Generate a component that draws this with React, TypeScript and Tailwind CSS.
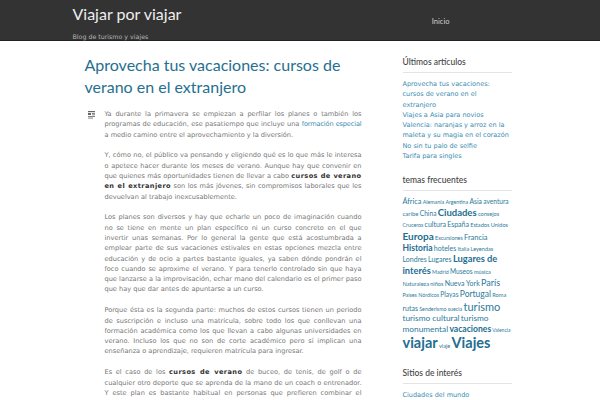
import React from "react";

const body = "font-['DejaVu_Sans',Verdana,sans-serif]";
const head = "font-['Lato','Open_Sans',sans-serif]";

const latest = [
  "Aprovecha tus vacaciones: cursos de verano en el extranjero",
  "Viajes a Asia para novios",
  "Valencia: naranjas y arroz en la maleta y su magia en el corazón",
  "No sin tu palo de selfie",
  "Tarifa para singles",
];

// [label, size in px, bold]
const tags: [string, number, boolean][] = [
  ["África", 7.3, false],
  ["Alemania", 5.3, false],
  ["Argentina", 5.3, false],
  ["Asia", 6.8, false],
  ["aventura", 6.6, false],
  ["caribe", 6, false],
  ["China", 6.6, false],
  ["Ciudades", 9.5, true],
  ["consejos", 5.6, false],
  ["Cruceros", 5.3, false],
  ["cultura", 7, false],
  ["España", 7, false],
  ["Estados Unidos", 5.6, false],
  ["Europa", 10, true],
  ["Excursiones", 5.3, false],
  ["Francia", 7.5, false],
  ["Historia", 8.5, true],
  ["hoteles", 7, false],
  ["Italia", 5.6, false],
  ["Leyendas", 5.6, false],
  ["Londres", 7, false],
  ["Lugares", 7, false],
  ["Lugares de interés", 9.3, true],
  ["Madrid", 5.3, false],
  ["Museos", 6.6, false],
  ["música", 5.6, false],
  ["Naturaleza", 5.6, false],
  ["niños", 5.6, false],
  ["Nueva York", 7, false],
  ["París", 9, false],
  ["Países Nórdicos", 5.3, false],
  ["Playas", 6.6, false],
  ["Portugal", 8.5, false],
  ["Roma", 5.6, false],
  ["rutas", 7, false],
  ["Senderismo", 5.3, false],
  ["suecia", 5.3, false],
  ["turismo", 11, false],
  ["turismo cultural", 8.3, false],
  ["turismo monumental", 8.3, false],
  ["vacaciones", 8.6, true],
  ["Valencia", 5, false],
  ["viajar", 14.5, true],
  ["viaje", 5.6, false],
  ["Viajes", 14.5, true],
];

function FormatIcon() {
  return (
    <svg width="7" height="8" viewBox="0 0 7 8" className="mt-[2px] shrink-0">
      <rect x="0" y="0" width="7" height="1.2" fill="#666" />
      <rect x="0" y="2" width="3" height="2" fill="#666" />
      <rect x="4" y="2" width="3" height="0.9" fill="#777" />
      <rect x="4" y="3.4" width="3" height="0.9" fill="#777" />
      <rect x="0" y="5" width="7" height="0.9" fill="#777" />
      <rect x="0" y="6.6" width="5" height="0.9" fill="#777" />
    </svg>
  );
}

function Widget({ title, children }: { title: string; children: React.ReactNode }) {
  return (
    <section className="mb-[13px]">
      <h3 className={`${head} text-[8.5px] font-medium text-[#444] leading-[12px] pb-[4px] border-b border-[#e4e4e4]`}>
        {title}
      </h3>
      <div className="pt-[6px]">{children}</div>
    </section>
  );
}

export default function App() {
  return (
    <div className="w-[600px] h-[400px] overflow-hidden bg-white">
      <header className="h-[41px] bg-[#333333] border-b border-[#222]">
        <div className="mx-auto w-[455px] flex justify-between">
          <div className="pt-[4px]">
            <div className={`${head} text-[16px] leading-[20px] text-[#eeeeee]`}>Viajar por viajar</div>
            <div className={`${body} text-[6.3px] leading-[10px] mt-[8px] text-[#b5b5b5]`}>Blog de turismo y viajes</div>
          </div>
          <nav className={`${head} text-[7.5px] text-[#d0d0d0] pt-[16px] pr-[78px]`}>Inicio</nav>
        </div>
      </header>

      <div className="mx-auto w-[455px] flex pt-[13px]">
        <main className="ml-[12px] w-[277px]">
          <h1 className={`${head} text-[16px] leading-[22px] text-[#266f8f]`}>
            Aprovecha tus vacaciones: cursos de verano en el extranjero
          </h1>
          <div className={`${body} mt-[11px] flex gap-[12px] text-[6.6px] leading-[10.3px] text-[#777] text-justify`}>
            <div className="w-[8px] shrink-0 pl-[3px]">
              <FormatIcon />
            </div>
            <div className="flex flex-col gap-[10.5px]">
              <p>
                Ya durante la primavera se empiezan a perfilar los planes o también los programas de educación, ese
                pasatiempo que incluye una <a className="text-[#3b8db0] tracking-[-0.15px]">formación especial</a> a
                medio camino entre el aprovechamiento y la diversión.
              </p>
              <p>
                Y, cómo no, el público va pensando y eligiendo qué es lo que más le interesa o apetece hacer durante
                los meses de verano. Aunque hay que convenir en que quienes más oportunidades tienen de llevar a cabo{" "}
                <b className="text-[#333] tracking-[0.4px]">cursos de verano en el extranjero</b> son los más jóvenes, sin
                compromisos laborales que les devuelvan al trabajo inexcusablemente.
              </p>
              <p>
                Los planes son diversos y hay que echarle un poco de imaginación cuando no se tiene en mente un plan
                específico ni un curso concreto en el que invertir unas semanas. Por lo general la gente que está
                acostumbrada a emplear parte de sus vacaciones estivales en estas opciones mezcla entre educación y de
                ocio a partes bastante iguales, ya saben dónde pondrán el foco cuando se aproxime el verano. Y para
                tenerlo controlado sin que haya que lanzarse a la improvisación, echar mano del calendario es el primer
                paso que hay que dar antes de apuntarse a un curso.
              </p>
              <p>
                Porque ésta es la segunda parte: muchos de estos cursos tienen un periodo de suscripción e incluso una
                matrícula, sobre todo los que conllevan una formación académica como los que llevan a cabo algunas
                universidades en verano. Incluso los que no son de corte académico pero sí implican una enseñanza o
                aprendizaje, requieren matrícula para ingresar.
              </p>
              <p>
                Es el caso de los <b className="text-[#333] tracking-[0.4px]">cursos de verano</b> de buceo, de tenis, de
                golf o de cualquier otro deporte que se aprenda de la mano de un coach o entrenador. Y este plan es
                bastante habitual en personas que prefieren combinar el aprendizaje con la actividad física durante el
                verano.
              </p>
            </div>
          </div>
        </main>

        <aside className="ml-[41px] w-[109px] pt-[2px]">
          <Widget title="Últimos artículos">
            <ul className={`${body} text-[6.5px] leading-[10.3px] text-[#3b8db0]`}>
              {latest.map((t) => (
                <li key={t}>{t}</li>
              ))}
            </ul>
          </Widget>
          <Widget title="temas frecuentes">
            <div className={`${head} text-[5px] leading-[10.8px] text-[#2d7a9c] pb-[2px]`}>
              {tags.map(([t, s, b]) => (
                <React.Fragment key={t}>
                  <a className={b ? "leading-none font-bold text-[#236e91]" : "leading-none"} style={{ fontSize: `${s}px` }}>
                    {t}
                  </a>{" "}
                </React.Fragment>
              ))}
            </div>
          </Widget>
          <Widget title="Sitios de interés">
            <ul className={`${body} text-[6.5px] leading-[10.3px] text-[#3b8db0]`}>
              <li>Ciudades del mundo</li>
            </ul>
          </Widget>
        </aside>
      </div>
    </div>
  );
}
